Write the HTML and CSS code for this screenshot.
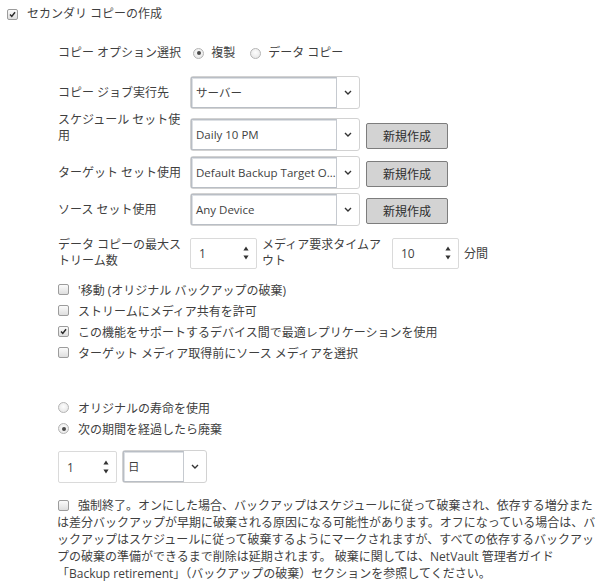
FILE: index.html
```html
<!DOCTYPE html>
<html lang="ja">
<head>
  <meta charset="UTF-8" />
  <meta name="viewport" content="width=device-width, initial-scale=1.0" />
  <title>セカンダリ コピーの作成</title>
  <link rel="stylesheet" href="styles.css">
</head>
<body>
  <div class="top-option">
    <span class="check checked"><svg viewBox="0 0 11 11"><path d="M2.5 5.5 L4.6 7.8 L8.6 2.8" /></svg></span>
    <span>セカンダリ コピーの作成</span>
  </div>

  <div class="panel">
    <div class="radio-row">
      <span class="radio-title">コピー オプション選択</span>
      <span class="radio checked"></span><span class="radio-text">複製</span>
      <span class="radio"></span><span class="radio-text">データ コピー</span>
    </div>

    <div class="field-row row-run">
      <div class="field-label">コピー ジョブ実行先</div>
      <div class="select">
        <span class="select-value">サーバー</span>
        <span class="select-arrow"><svg viewBox="0 0 8 5"><path d="M1 1 L4 4 L7 1" /></svg></span>
      </div>
    </div>

    <div class="field-row row-schedule">
      <div class="field-label two-line">スケジュール セット使用</div>
      <div class="select">
        <span class="select-value">Daily 10 PM</span>
        <span class="select-arrow"><svg viewBox="0 0 8 5"><path d="M1 1 L4 4 L7 1" /></svg></span>
      </div>
      <button class="new-btn">新規作成</button>
    </div>

    <div class="field-row row-target">
      <div class="field-label">ターゲット セット使用</div>
      <div class="select">
        <span class="select-value">Default Backup Target Options</span>
        <span class="select-arrow"><svg viewBox="0 0 8 5"><path d="M1 1 L4 4 L7 1" /></svg></span>
      </div>
      <button class="new-btn">新規作成</button>
    </div>

    <div class="field-row row-source">
      <div class="field-label">ソース セット使用</div>
      <div class="select">
        <span class="select-value">Any Device</span>
        <span class="select-arrow"><svg viewBox="0 0 8 5"><path d="M1 1 L4 4 L7 1" /></svg></span>
      </div>
      <button class="new-btn">新規作成</button>
    </div>

    <div class="field-row row-streams">
      <div class="field-label">データ コピーの最大ストリーム数</div>
      <div class="spin">
        <span class="spin-value">1</span>
        <span class="spin-arrows"><svg viewBox="0 0 6 14"><path d="M3 0.5 L5.6 4.5 L0.4 4.5 Z M3 13.5 L5.6 9.5 L0.4 9.5 Z" /></svg></span>
      </div>
      <div class="field-label timeout-label">メディア要求タイムアウト</div>
      <div class="spin">
        <span class="spin-value">10</span>
        <span class="spin-arrows"><svg viewBox="0 0 6 14"><path d="M3 0.5 L5.6 4.5 L0.4 4.5 Z M3 13.5 L5.6 9.5 L0.4 9.5 Z" /></svg></span>
      </div>
      <span class="unit">分間</span>
    </div>

    <div class="check-list">
      <div class="check-row"><span class="check"></span><span>'移動 (オリジナル バックアップの破棄)</span></div>
      <div class="check-row"><span class="check"></span><span>ストリームにメディア共有を許可</span></div>
      <div class="check-row"><span class="check checked"><svg viewBox="0 0 11 11"><path d="M2.5 5.5 L4.6 7.8 L8.6 2.8" /></svg></span><span>この機能をサポートするデバイス間で最適レプリケーションを使用</span></div>
      <div class="check-row"><span class="check"></span><span>ターゲット メディア取得前にソース メディアを選択</span></div>
    </div>

    <div class="retire-list">
      <div class="check-row"><span class="radio"></span><span>オリジナルの寿命を使用</span></div>
      <div class="check-row"><span class="radio checked"></span><span>次の期間を経過したら廃棄</span></div>
    </div>

    <div class="period-row">
      <div class="spin spin-small">
        <span class="spin-value">1</span>
        <span class="spin-arrows"><svg viewBox="0 0 6 14"><path d="M3 0.5 L5.6 4.5 L0.4 4.5 Z M3 13.5 L5.6 9.5 L0.4 9.5 Z" /></svg></span>
      </div>
      <div class="select select-small">
        <span class="select-value">日</span>
        <span class="select-arrow"><svg viewBox="0 0 8 5"><path d="M1 1 L4 4 L7 1" /></svg></span>
      </div>
    </div>

    <p class="force-note"><span class="check"></span>強制終了。オンにした場合、バックアップはスケジュールに従って破棄され、依存する増分または差分バックアップが早期に破棄される原因になる可能性があります。オフになっている場合は、バックアップはスケジュールに従って破棄するようにマークされますが、すべての依存するバックアップの破棄の準備ができるまで削除は延期されます。 破棄に関しては、NetVault 管理者ガイド<br>「Backup retirement」（バックアップの破棄）セクションを参照してください。</p>
  </div>
</body>
</html>
```

FILE: styles.css
```css
body {
  margin: 0;
  font-family: "Open Sans", "Noto Sans CJK JP", sans-serif;
  font-size: 12px;
  color: #3f3f3f;
  background: #fff;
}

.top-option {
  display: flex;
  align-items: center;
  padding: 6px 0 0 7px;
  line-height: 16px;
}

.top-option .check {
  margin-right: 9px;
}

.panel {
  margin-left: 58px;
}

/* checkbox + radio */
.check {
  display: inline-block;
  flex: none;
  width: 9px;
  height: 9px;
  border: 1px solid #9c9c9c;
  border-radius: 2px;
  background: linear-gradient(#fbfbfb, #dedede);
  vertical-align: middle;
}

.check svg {
  display: block;
  width: 9px;
  height: 9px;
}

.check path {
  fill: none;
  stroke: #2a2a2a;
  stroke-width: 1.8;
}

.radio {
  display: inline-block;
  flex: none;
  width: 9px;
  height: 9px;
  border: 1px solid #b4b4b4;
  border-radius: 50%;
  background: radial-gradient(circle at 50% 40%, #fdfdfd, #e2e2e2);
  position: relative;
}

.radio.checked::after {
  content: "";
  position: absolute;
  left: 2.5px;
  top: 2.5px;
  width: 4px;
  height: 4px;
  border-radius: 50%;
  background: #4a4a4a;
}

.radio-row {
  display: flex;
  align-items: center;
  margin-top: 23px;
  line-height: 16px;
}

.radio-title {
  margin-right: 12px;
}

.radio-text {
  margin: 0 15px 0 7px;
}

/* form rows */
.field-row {
  display: flex;
  align-items: center;
}

.row-run { margin-top: 15px; }
.row-schedule { margin-top: 9px; }
.row-target { margin-top: 5px; }
.row-source { margin-top: 4px; }
.row-streams { margin-top: 11px; }

.field-label {
  width: 132px;
  flex: none;
  line-height: 16px;
}

.field-label.two-line {
  align-self: flex-start;
  margin-top: -6px;
}

.select {
  display: flex;
  width: 168px;
  height: 31px;
  border: 1px solid #d2d2d2;
  border-radius: 3px;
  background: #fff;
  flex: none;
}

.select-value {
  flex: 1;
  min-width: 0;
  display: block;
  padding-left: 4px;
  border: 1px solid #b9bec5;
  border-right-color: #c6cad0;
  box-shadow: inset 1px 1px 0 #dde0e4;
  white-space: nowrap;
  overflow: hidden;
  text-overflow: ellipsis;
  line-height: 29px;
  font-size: 11.5px;
}

.select-arrow {
  width: 22px;
  flex: none;
  display: flex;
  align-items: center;
  justify-content: center;
}

.select-arrow svg {
  width: 8px;
  height: 5px;
}

.select-arrow path {
  fill: none;
  stroke: #333;
  stroke-width: 1.4;
}

.new-btn {
  margin-left: 6px;
  width: 82px;
  height: 26px;
  margin-top: 3px;
  padding: 0;
  font: inherit;
  color: #2e2e2e;
  background: #d3d3d3;
  border: 1px solid #7d7d7d;
  border-radius: 2px;
}

.spin {
  display: flex;
  align-items: center;
  width: 65px;
  height: 29px;
  border: 1px solid #dadada;
  border-radius: 2px;
  flex: none;
}

.spin-value {
  flex: 1;
  padding-left: 8px;
}

.spin-arrows {
  width: 20px;
  display: flex;
  justify-content: center;
}

.spin-arrows svg {
  width: 6px;
  height: 14px;
}

.spin-arrows path {
  fill: #333;
}

.timeout-label {
  width: 130px;
  margin-left: 5px;
}

.unit {
  margin-left: 5px;
}

/* checkbox lists */
.check-list {
  margin-top: 10px;
}

.check-row {
  display: flex;
  align-items: center;
  height: 21px;
}

.check-row .check,
.check-row .radio {
  margin-right: 9px;
}

.retire-list {
  margin-top: 34px;
}

.period-row {
  display: flex;
  align-items: flex-start;
  margin-top: 11px;
}

.spin-small {
  width: 57px;
  height: 30px;
  margin-top: 1px;
}

.select-small {
  width: 83px;
  margin-left: 5px;
}

.force-note {
  margin: 14px 2px 0 -1px;
  line-height: 17px;
}

.force-note .check {
  margin: -2px 9px 0 1px;
}
```
